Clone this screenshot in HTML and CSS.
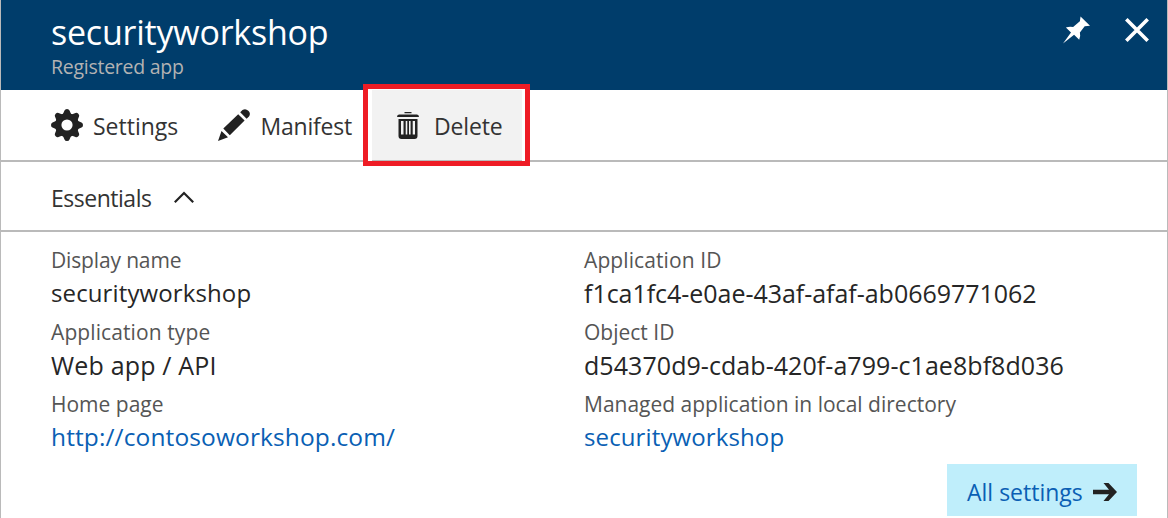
FILE: index.html
```
<!DOCTYPE html>
<html lang="en">
<head>
<meta charset="utf-8">
<title>securityworkshop</title>
<link rel="stylesheet" href="styles.css">
</head>
<body>
<main class="blade">
  <header class="header">
    <div>
      <h1 class="title"><span>securityworkshop</span></h1>
      <p class="subtitle"><span>Registered app</span></p>
    </div>
    <div class="window-actions">
      <svg class="pin" viewBox="0 0 28 28"><path fill="#fff" d="M18.2 0 28 9.500 22.500 10 17.500 16.500Q18.500 20 16.800 24L11.500 18.800 0 28 8.300 16.500 3 11.500Q7 9.800 10.500 11L17.500 5Z"/></svg>
      <svg class="close" viewBox="0 0 24 24"><path stroke="#fff" stroke-width="3.600" d="M1.300 1.300 22.700 22.700M22.700 1.300 1.300 22.700"/></svg>
    </div>
  </header>
  <nav class="toolbar">
    <button class="command settings"><svg class="gear" viewBox="-16 -16 32 32"><g fill="#222"><path fill-rule="evenodd" d="M0-12A12 12 0 1 1 0 12 12 12 0 1 1 0-12ZM0-5.600A5.600 5.600 0 1 0 0 5.600 5.600 5.600 0 1 0 0-5.600Z"/><path id="tooth" d="M-4.500-10-2.500-14.500Q-2-16 0-16T2.500-14.500L4.500-10Z"/><use href="#tooth" transform="rotate(45)"/><use href="#tooth" transform="rotate(90)"/><use href="#tooth" transform="rotate(135)"/><use href="#tooth" transform="rotate(180)"/><use href="#tooth" transform="rotate(225)"/><use href="#tooth" transform="rotate(270)"/><use href="#tooth" transform="rotate(315)"/></g></svg><span>Settings</span></button>
    <button class="command manifest"><svg class="pencil" viewBox="0 0 32 32"><path fill="#222" d="M0 32 3.500 22 10 28.300ZM5.300 19.500 20.200 5.200 26.600 11.600 11.800 26.200ZM22.200 3.300 24.500 1Q27.500-1 30.300 1.700T31 7.500L28.600 9.700Z"/></svg><span>Manifest</span></button>
    <div class="callout"><button class="command delete"><svg class="trash" viewBox="0 0 22 27"><path fill="#222" fill-rule="evenodd" d="M7.500 0H14.500V1.300H7.500ZM0 5Q0 2.800 2 2.500H20Q22 2.800 22 5ZM1.500 7H20.500V24Q20.500 27 17.500 27H4.500Q1.500 27 1.500 24ZM4 9V22.500H6.500V9ZM8.700 9V22.500H10.300V9ZM12 9V22.500H13.600V9ZM15.700 9V22.500H18V9Z"/></svg><span>Delete</span></button></div>
  </nav>
  <section class="essentials"><span>Essentials</span><svg class="chevron" viewBox="0 0 20 12"><path fill="none" stroke="#222" stroke-width="2.200" d="M.800 11.200 10 2 19.200 11.200"/></svg></section>
  <section class="details">
    <dl class="column">
      <dt class="narrow"><span>Display name</span></dt><dd class="name"><span>securityworkshop</span></dd>
      <dt class="wide"><span>Application type</span></dt><dd class="type"><span>Web app / API</span></dd>
      <dt><span>Home page</span></dt><dd class="link url"><span>http://contosoworkshop.com/</span></dd>
    </dl>
    <dl class="column">
      <dt class="wide"><span>Application ID</span></dt><dd class="app-id"><span>f1ca1fc4-e0ae-43af-afaf-ab0669771062</span></dd>
      <dt><span>Object ID</span></dt><dd class="object-id"><span>d54370d9-cdab-420f-a799-c1ae8bf8d036</span></dd>
      <dt><span>Managed application in local directory</span></dt><dd class="link name"><span>securityworkshop</span></dd>
    </dl>
  </section>
  <a class="all-settings"><span>All settings</span><svg class="arrow" viewBox="0 0 24 18"><path fill="#222" d="M0 6.800H16L10.500 0H15.500L24 9 15.500 18H10.500L16 11.200H0Z"/></svg></a>
</main>
</body>
</html>
```

FILE: styles.css
```
* { box-sizing: border-box; }
body, h1, p, dl, dd { margin: 0; }
body { background: #fff; color: #262626; font-family: "Open Sans", "Noto Sans", sans-serif; }
svg { display: block; flex: none; overflow: visible; }
.blade { height: 518px; overflow: hidden; border: solid #bababa; border-width: 0 1px; }
.header { display: flex; justify-content: space-between; height: 90px; margin: 0 -1px; padding: 10px 19px 0 51px; background: #003d6b; color: #fff; }
.title { font-size: 34px; line-height: 44px; font-weight: 400; letter-spacing: -.22px; }
.subtitle { padding-top: 1px; font-size: 19.5px; line-height: 24px; color: #b3b3b3; letter-spacing: -.26px; }
.window-actions { display: flex; gap: 35px; padding-top: 6px; }
.pin { width: 27px; height: 28px; }
.close { width: 24px; height: 24px; margin-top: 2px; }
.toolbar { display: flex; height: 72px; padding-left: 50px; border-bottom: 2px solid #bababa; }
.command { display: flex; align-items: center; height: 70px; padding: 0; border: 0; background: none; color: #333; font: 400 23px/30px "Open Sans", sans-serif; letter-spacing: -.2px; }
.command span { padding-top: 2px; }
.gear { width: 32px; height: 32px; margin-right: 10px; }
.settings { width: 167px; letter-spacing: 0; }
.pencil { width: 32px; height: 32px; margin-right: 10.5px; }
.callout { position: absolute; left: 363px; top: 84px; width: 167px; height: 82px; padding-left: 4px; border: 5px solid #ee1c25; background: #fff; }
.delete { width: 150px; height: 71px; margin-top: 1px; padding: 0 0 1px 25px; background: #f2f2f2; border-bottom: 1px solid #bababa; letter-spacing: -.15px; }
.trash { width: 22px; height: 27px; margin: 1px 15px 0 0; }
.essentials { display: flex; align-items: center; height: 70px; padding: 4px 0 0 50px; border-bottom: 2px solid #bababa; font-size: 23px; color: #333; letter-spacing: -.48px; }
.essentials span { width: 101px; }
.chevron { width: 20px; height: 12px; margin: -2px 0 0 22px; }
.details { display: grid; grid-template-columns: 533px 1fr; padding: 12px 0 0 50px; }
dt { font-size: 21px; line-height: 32px; color: #555; }
dt.wide { letter-spacing: .1px; }
dt.narrow { letter-spacing: -.15px; }
dd { font-size: 25px; line-height: 34px; margin-bottom: 6px; white-space: nowrap; }
.name { font-size: 24px; letter-spacing: .12px; }
.type { letter-spacing: .18px; }
.url { font-size: 24.5px; letter-spacing: .12px; }
.app-id { letter-spacing: -.03px; }
.object-id { letter-spacing: .06px; }
.link { color: #0a5fb4; }
.all-settings { display: flex; align-items: center; width: 190px; height: 52px; margin: 4px 30px 0 auto; padding: 3px 0 0 20px; background: #bfeefb; color: #0a5fb4; font-size: 23px; }
.arrow { width: 24px; height: 18px; margin: 0 0 0 10px; }
```
